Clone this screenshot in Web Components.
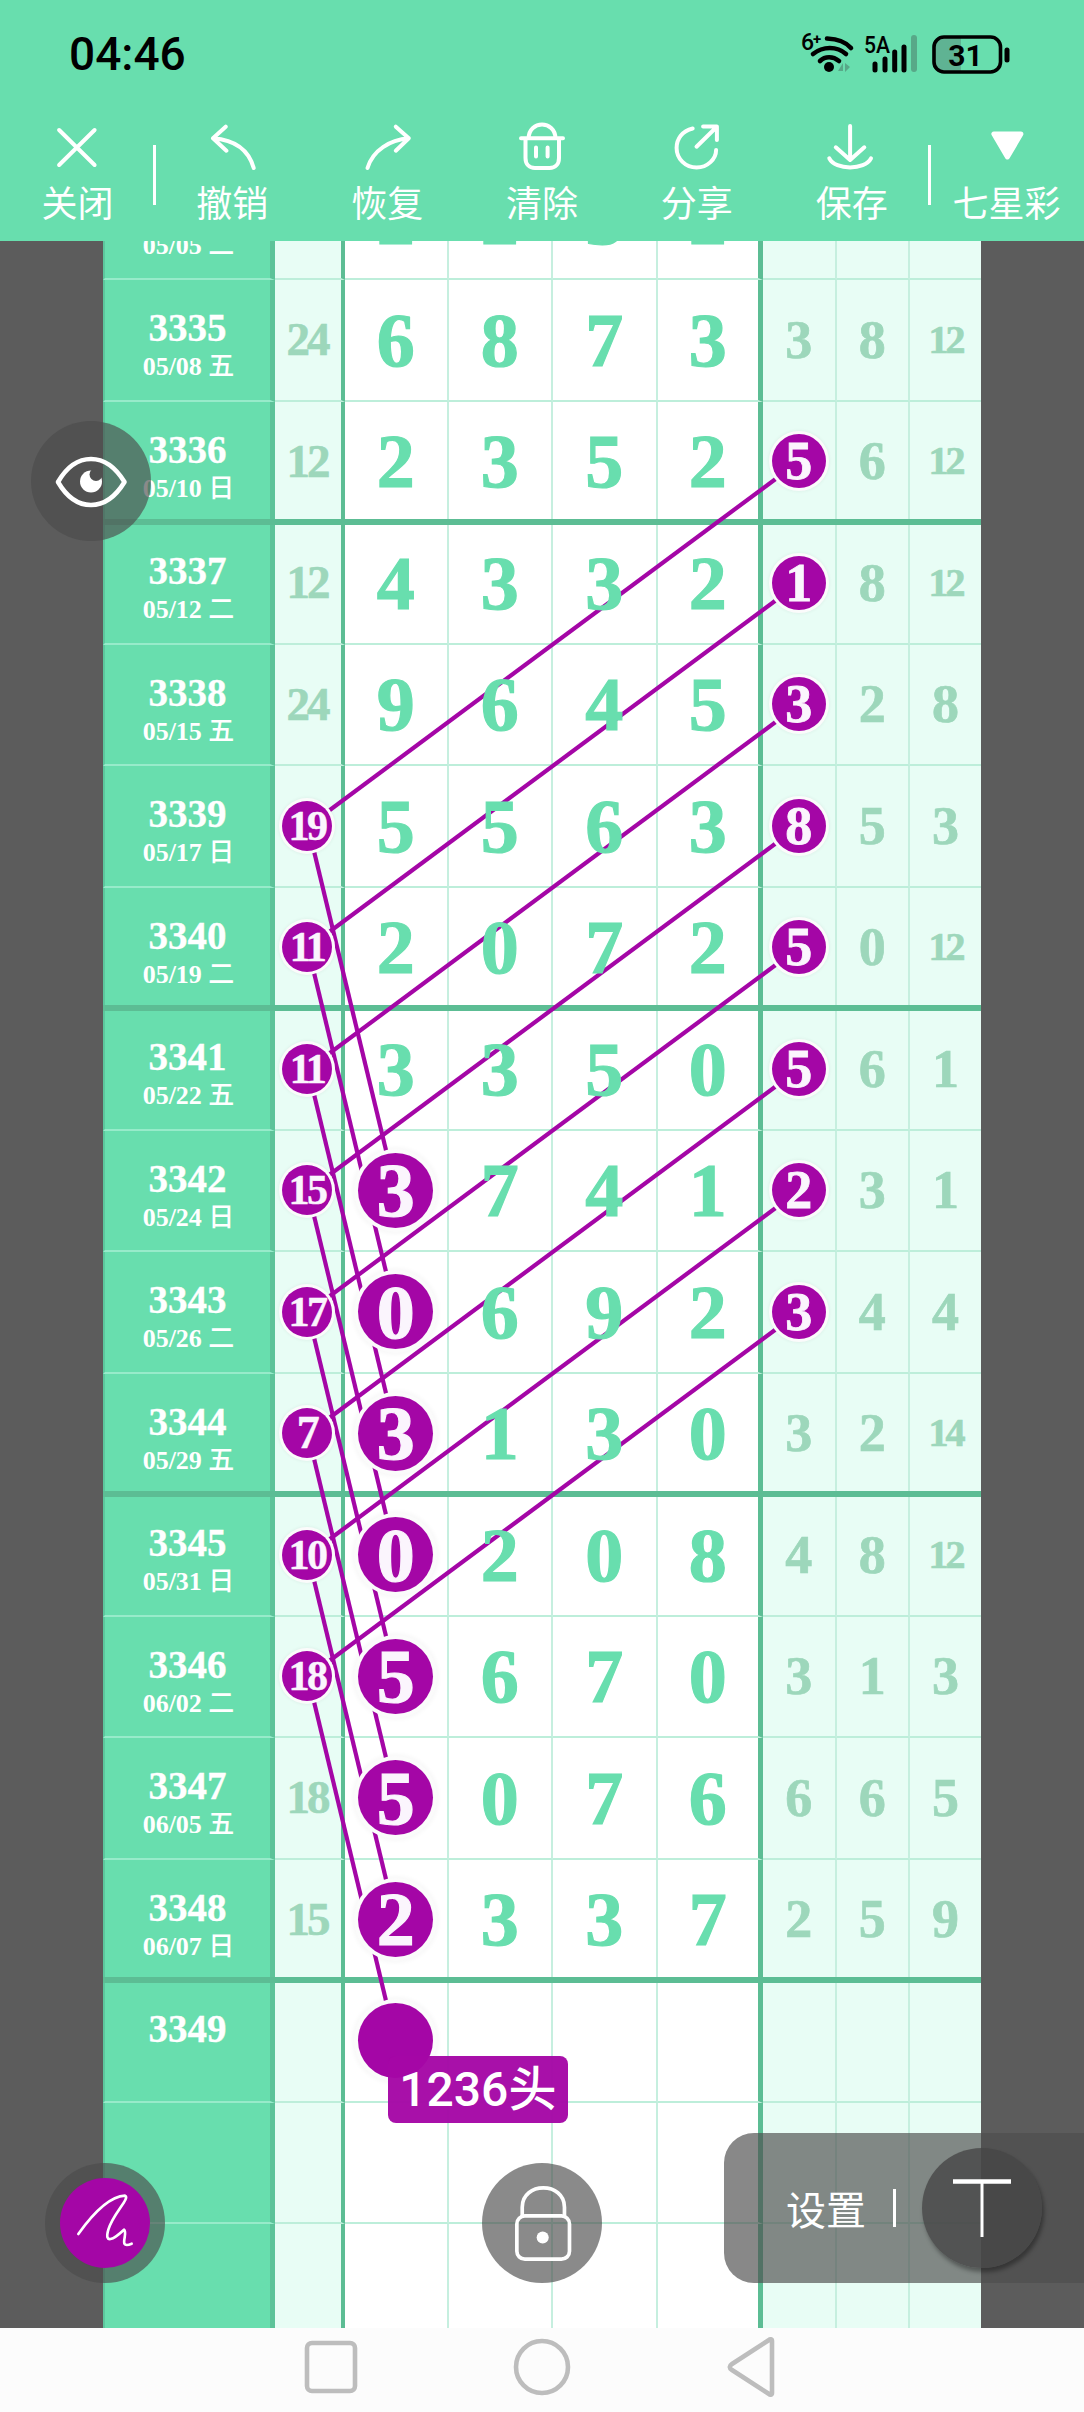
<!DOCTYPE html>
<html lang="zh">
<head>
<meta charset="utf-8">
<title>七星彩</title>
<style>
  html, body { margin: 0; padding: 0; background: #5c5c5c; }
</style>
</head>
<body>
<app-shell>
  <status-bar slot="top"></status-bar>
  <tool-bar slot="top">
    <tool-btn label="关闭" divider="right"><svg viewBox="47.4 122 60 50"><path d="M59.5 130 95 165M95 130 59.5 165"/></svg></tool-btn>
    <tool-btn label="撤销"><svg viewBox="202.3 122 60 50"><path d="M226 126.7 213.3 138.3 226.7 150.7M213.3 138.3C235 140 249 150 254 168"/></svg></tool-btn>
    <tool-btn label="恢复"><svg viewBox="357.2 122 60 50"><path d="M396 126.7 409 138.3 396 150.7M409 138.3C390 140 373 150 367.7 168"/></svg></tool-btn>
    <tool-btn label="清除"><svg viewBox="512 122 60 50"><path d="M521 138.3H563M528.6 138.3C529 120 555 120 555.5 138.3M525.5 138.3V158C525.5 164 529 168 535 168H549.5C555.5 168 559 164 559 158V138.3M536 147.5V156.5M547.6 147.5V156.5"/></svg></tool-btn>
    <tool-btn label="分享"><svg viewBox="666.9 122 60 50"><path d="M692.6 128.5C682 131 676.5 139 676.5 148C676.5 159 685.5 167.5 696.5 167.5C707.5 167.5 716 159 716 150M696.4 146.7 716.5 127M703 126.5H716.8V140"/></svg></tool-btn>
    <tool-btn label="保存"><svg viewBox="821.7 122 60 50"><path d="M849.8 126V159M835.5 147.3 849.8 160 864 147.3M829 158.3C835 170.5 864.5 170.5 870.7 158.3"/></svg></tool-btn>
    <tool-btn label="七星彩" divider="left"><svg viewBox="976.6 122 60 50"><path class="solid" d="M993.5 134H1020.5L1007 157Z"/></svg></tool-btn>
  </tool-bar>

  <draw-sheet slot="sheet">
    <sheet-row no="" date="05/05 二" sum="" digits="2 2 3 2" rest="- - -"></sheet-row>
    <sheet-row no="3335" date="05/08 五" sum="24" digits="6 8 7 3" rest="3 8 12"></sheet-row>
    <sheet-row no="3336" date="05/10 日" sum="12" digits="2 3 5 2" rest="*5 6 12" sep></sheet-row>
    <sheet-row no="3337" date="05/12 二" sum="12" digits="4 3 3 2" rest="*1 8 12"></sheet-row>
    <sheet-row no="3338" date="05/15 五" sum="24" digits="9 6 4 5" rest="*3 2 8"></sheet-row>
    <sheet-row no="3339" date="05/17 日" sum="*19" digits="5 5 6 3" rest="*8 5 3"></sheet-row>
    <sheet-row no="3340" date="05/19 二" sum="*11" digits="2 0 7 2" rest="*5 0 12" sep></sheet-row>
    <sheet-row no="3341" date="05/22 五" sum="*11" digits="3 3 5 0" rest="*5 6 1"></sheet-row>
    <sheet-row no="3342" date="05/24 日" sum="*15" digits="*3 7 4 1" rest="*2 3 1"></sheet-row>
    <sheet-row no="3343" date="05/26 二" sum="*17" digits="*0 6 9 2" rest="*3 4 4"></sheet-row>
    <sheet-row no="3344" date="05/29 五" sum="*7" digits="*3 1 3 0" rest="3 2 14" sep></sheet-row>
    <sheet-row no="3345" date="05/31 日" sum="*10" digits="*0 2 0 8" rest="4 8 12"></sheet-row>
    <sheet-row no="3346" date="06/02 二" sum="*18" digits="*5 6 7 0" rest="3 1 3"></sheet-row>
    <sheet-row no="3347" date="06/05 五" sum="18" digits="*5 0 7 6" rest="6 6 5"></sheet-row>
    <sheet-row no="3348" date="06/07 日" sum="15" digits="*2 3 3 7" rest="2 5 9" sep></sheet-row>
    <sheet-row no="3349" date="" sum="" digits="* - - -" rest="- - -" tag="1236头"></sheet-row>
    <sheet-row no="" date="" sum="" digits="- - - -" rest="- - -"></sheet-row>
    <sheet-row no="" date="" sum="" digits="- - - -" rest="- - -"></sheet-row>
  </draw-sheet>

  <float-btn slot="float" style="left:30.5px;top:421px">
    <svg viewBox="30.5 421 120 120" width="120" height="120">
      <path fill="none" stroke="#fff" stroke-width="4.6" stroke-linejoin="round" d="M57.5 482C68 464 80 459 90.5 459C101 459 113 464 124 482C113 500 101 505 90.5 505C80 505 68 500 57.5 482Z"/>
      <circle cx="90.5" cy="481.5" r="11" fill="#fff"/>
      <circle cx="95.5" cy="474.5" r="6.5" fill="#505050"/>
    </svg>
  </float-btn>
  <float-btn slot="float" style="left:45px;top:2163px">
    <svg viewBox="90 85 270 270" width="90" height="90">
      <circle cx="225" cy="220" r="135" fill="#a406a6"/>
      <path fill="none" stroke="#fff" stroke-width="8" stroke-linecap="round" stroke-linejoin="round" d="M145 253C190 190 240 140 285 138C302 145 250 190 235 240C222 285 250 270 282 240C296 250 262 300 305 282"/>
    </svg>
  </float-btn>
  <float-btn slot="float" style="left:482px;top:2163px">
    <svg viewBox="37 100 358 358" width="120" height="120">
      <path fill="none" stroke="#fff" stroke-width="11" d="M157 258V232C157 155 283 155 283 232V258"/>
      <rect x="141" y="258" width="157" height="129" rx="24" fill="none" stroke="#fff" stroke-width="11"/>
      <circle cx="218" cy="322" r="18" fill="#fff"/>
    </svg>
  </float-btn>
  <settings-panel slot="float"></settings-panel>

  <nav-bar slot="bottom"></nav-bar>
</app-shell>

<script>
class AppShell extends HTMLElement {
  connectedCallback() {
    this.attachShadow({ mode: 'open' });
    this.shadowRoot.innerHTML = `
      <style>
        :host {
          display: flex;
          flex-direction: column;
          position: relative;
          width: 1084px;
          height: 2412px;
          overflow: hidden;
          font-family: "Noto Sans CJK SC", Roboto, sans-serif;
        }
        .top { background: #68deae; height: 241px; display: flex; flex-direction: column; flex: none; }
        .sheet { flex: 1; min-height: 0; display: flex; }
        .bottom { flex: none; }
      </style>
      <div class="top"><slot name="top"></slot></div>
      <div class="sheet"><slot name="sheet"></slot></div>
      <div class="bottom"><slot name="bottom"></slot></div>
      <slot name="float"></slot>
    `;
  }
}

class StatusBar extends HTMLElement {
  connectedCallback() {
    this.attachShadow({ mode: 'open' });
    this.shadowRoot.innerHTML = `
      <style>
        :host {
          display: flex;
          justify-content: space-between;
          align-items: center;
          height: 106px;
          padding: 0 70px 0 69px;
          box-sizing: border-box;
        }
        .time { font: 500 46px Roboto, sans-serif; color: #000; margin-top: 1px; }
        svg { display: block; width: 215px; height: 48px; margin-top: 2px; }
        text { font-family: Roboto, sans-serif; fill: #000; }
        .arc { fill: none; stroke: #000; stroke-width: 4.6; stroke-linecap: round; }
        .bar { stroke: #000; stroke-width: 5; stroke-linecap: round; }
      </style>
      <span class="time">04:46</span>
      <svg viewBox="800 30 215 48">
        <text x="802" y="50" font-size="23" font-weight="500">6</text>
        <text x="814" y="44" font-size="15" font-weight="700">+</text>
        <path class="arc" d="M828 38.5C838 39 847 42 852 48"/>
        <path class="arc" d="M814 54C824 46 838 46 847 54"/>
        <path class="arc" d="M821 61C826 56 834 56 840 61"/>
        <circle cx="830" cy="67" r="5"/>
        <path d="M839 71 844 63V71ZM846 63 851 67 846 72Z" fill="#58a888"/>
        <text x="865" y="53" font-size="23" font-weight="500" textLength="26" lengthAdjust="spacingAndGlyphs">5A</text>
        <path class="bar" d="M876 64V70M886 59V70M895.7 52V70M905 47V70"/>
        <path d="M915 38V69" stroke="#58a888" stroke-width="6" stroke-linecap="round"/>
        <path d="M945 38H962V71H945C939 71 936 68 936 62V47C936 41 939 38 945 38Z" fill="#5fb393"/>
        <rect x="935" y="37" width="66.5" height="35" rx="10" fill="none" stroke="#000" stroke-width="3.6"/>
        <text x="966.5" y="66" font-size="30" font-weight="700" text-anchor="middle">31</text>
        <path d="M1008 50V60" stroke="#000" stroke-width="5" stroke-linecap="round"/>
      </svg>
    `;
  }
}

class ToolBar extends HTMLElement {
  connectedCallback() {
    this.attachShadow({ mode: 'open' });
    this.shadowRoot.innerHTML = `
      <style>
        :host {
          display: grid;
          grid-template-columns: repeat(7, 1fr);
          padding-top: 16px;
        }
      </style>
      <slot></slot>
    `;
  }
}

class ToolBtn extends HTMLElement {
  connectedCallback() {
    this.attachShadow({ mode: 'open' });
    this.shadowRoot.innerHTML = `
      <style>
        :host {
          display: flex;
          flex-direction: column;
          align-items: center;
          position: relative;
          color: #fff;
        }
        :host([divider])::after {
          content: "";
          position: absolute;
          top: 23px;
          height: 60px;
          width: 2.5px;
          background: #fff;
        }
        :host([divider="right"])::after { right: -1px; }
        :host([divider="left"])::after { left: -1px; }
        ::slotted(svg) {
          display: block;
          width: 60px;
          height: 50px;
          fill: none;
          stroke: #fff;
          stroke-width: 4;
          stroke-linecap: round;
          stroke-linejoin: round;
        }
        .label {
          font: 400 36px/40px "Noto Sans CJK SC", sans-serif;
          white-space: nowrap;
          margin-top: 9px;
        }
      </style>
      <slot></slot>
      <span class="label">${this.getAttribute('label')}</span>
    `;
    const solid = this.querySelector('.solid');
    if (solid) { solid.style.fill = '#fff'; solid.style.strokeWidth = '5'; }
  }
}

class PickBall extends HTMLElement {
  connectedCallback() {
    this.attachShadow({ mode: 'open' });
    const tag = this.getAttribute('tag');
    this.shadowRoot.innerHTML = `
      <style>
        :host {
          display: flex;
          align-items: center;
          justify-content: center;
          position: relative;
          z-index: 3;
          flex: none;
          width: 50px;
          height: 50px;
          border-radius: 50%;
          background: #a406a6;
          color: #fbf5fd;
          font: bold 42px/1 "Liberation Serif", serif;
          letter-spacing: -2.5px;
          -webkit-text-stroke: .5px #fbf5fd;
          box-shadow: 0 0 0 3px #fbfbfb, 0 0 3px 4px rgba(0, 0, 0, .04);
        }
        :host([size="mid"]) { width: 54px; height: 54px; font-size: 54px; letter-spacing: 0; -webkit-text-stroke-width: .8px; }
        :host([size="big"]) { width: 75px; height: 75px; font-size: 76px; letter-spacing: 0; -webkit-text-stroke-width: 1.2px;
          box-shadow: 0 0 0 4px #fbfbfb, 0 0 4px 6px rgba(0, 0, 0, .03); }
        :host([one]) { font-size: 46px; }
        .tag {
          position: absolute;
          left: 29.5px;
          top: 53px;
          padding: 0 11.5px;
          height: 67px;
          display: flex;
          align-items: center;
          border-radius: 8px;
          background: rgba(164, 6, 166, .96);
          color: #fff;
          font: 500 48px/1 Roboto, "Noto Sans CJK SC", sans-serif;
          letter-spacing: 0;
          -webkit-text-stroke: 0;
          white-space: nowrap;
        }
      </style>
      <slot></slot>
      ${tag ? `<span class="tag">${tag}</span>` : ''}
    `;
  }
}

class SheetRow extends HTMLElement {
  cell(token, cls, ballSize) {
    if (token === '-' || token === '') return `<div class="cell ${cls}"></div>`;
    if (token[0] === '*') {
      const val = token.slice(1);
      const one = ballSize === 'small' && val.length === 1 ? ' one' : '';
      const tag = !val && this.getAttribute('tag') ? ` tag="${this.getAttribute('tag')}"` : '';
      return `<div class="cell ${cls}"><pick-ball size="${ballSize}"${one}${tag}>${val}</pick-ball></div>`;
    }
    const small = token.length > 1 ? ' two' : '';
    return `<div class="cell ${cls}"><span class="num${small}">${token}</span></div>`;
  }

  connectedCallback() {
    this.attachShadow({ mode: 'open' });
    const no = this.getAttribute('no');
    const date = (this.getAttribute('date') || '').split(' ');
    const digits = this.getAttribute('digits').split(' ');
    const rest = this.getAttribute('rest').split(' ');
    this.shadowRoot.innerHTML = `
      <style>
        :host {
          display: grid;
          grid-template-columns: 172px 70px 103.5px 104.5px 104.5px 105.5px 73.5px 73.5px 71px;
          height: 121.5px;
          position: relative;
          flex: none;
          font-family: "Liberation Serif", "Noto Sans CJK SC", serif;
          font-weight: bold;
        }
        .cell {
          display: flex;
          align-items: center;
          justify-content: center;
          box-sizing: border-box;
          border-bottom: 2px solid #bdeeda;
        }
        .num { position: relative; z-index: 2; line-height: 1; }
        .name {
          flex-direction: column;
          justify-content: flex-start;
          background: #68deae;
          color: #fff;
          border-left: 2px solid #5cc79d;
          border-right: 5px solid #5dc399;
          border-bottom-color: #97ebca;
        }
        .name b { font-size: 39px; line-height: 40px; margin-top: 28px; min-height: 40px; -webkit-text-stroke: .3px #fff; }
        .name i { font-style: normal; font-size: 26px; line-height: 30px; margin: 1px 0 0 2px; white-space: nowrap; }
        .name i span { font-family: "Noto Sans CJK SC", sans-serif; font-weight: 500; }
        .sum {
          background: #e8fdf5;
          color: #9dd7bb;
          border-right: 4px solid #5cbd94;
          font-size: 47px;
          letter-spacing: -3px;
          padding-right: 2px;
          -webkit-text-stroke: .6px #9dd7bb;
        }
        .main {
          background: #fff;
          color: #68deae;
          border-right: 2px solid #c6efdf;
          font-size: 76px;
          -webkit-text-stroke: 1.2px #68deae;
        }
        .main.last { border-right: 5px solid #5cbd94; }
        .rest {
          background: #e8fdf5;
          color: #9dd7bb;
          border-right: 2px solid #c6efdf;
          font-size: 54px;
          -webkit-text-stroke: .7px #9dd7bb;
        }
        .rest.last { border-right: 0; }
        .rest .two { font-size: 40px; letter-spacing: -3px; }
        .sep {
          position: absolute;
          z-index: 1;
          left: 0;
          right: 0;
          bottom: -2px;
          height: 6px;
          background: #5cbd94;
        }
      </style>
      <div class="cell name">
        ${no || date[0] ? `<b>${no}</b>` : ''}
        ${date[0] ? `<i>${date[0]} <span>${date[1]}</span></i>` : ''}
      </div>
      ${this.cell(this.getAttribute('sum'), 'sum', 'small')}
      ${digits.map((d, i) => this.cell(d, 'main' + (i === 3 ? ' last' : ''), 'big')).join('')}
      ${rest.map((d, i) => this.cell(d, 'rest' + (i === 2 ? ' last' : ''), 'mid')).join('')}
      ${this.hasAttribute('sep') ? '<div class="sep"></div>' : ''}
    `;
  }
}

class DrawSheet extends HTMLElement {
  connectedCallback() {
    this.attachShadow({ mode: 'open' });
    // row centre in page coordinates, rows start at 158.5 and are 121.5 tall
    const rowY = no => 158.5 + 121.5 * (no - 3334) + 60.25;
    let lines = '';
    for (let no = 3336; no <= 3343; no++) {
      lines += `<line x1="798.75" y1="${rowY(no)}" x2="308" y2="${rowY(no + 3)}"/>`;
    }
    for (let no = 3339; no <= 3346; no++) {
      lines += `<line x1="308" y1="${rowY(no)}" x2="395.75" y2="${rowY(no + 3)}"/>`;
    }
    this.shadowRoot.innerHTML = `
      <style>
        :host {
          display: block;
          position: relative;
          z-index: 0;
          flex: 1;
          overflow: hidden;
          background: #5c5c5c;
        }
        .rows {
          display: flex;
          flex-direction: column;
          width: 878px;
          margin: -82.5px 0 0 103px;
        }
        svg {
          position: absolute;
          left: 0;
          top: 0;
          width: 1084px;
          height: 2087px;
          z-index: 1;
          stroke: #a406a6;
          stroke-width: 4.2;
        }
      </style>
      <div class="rows"><slot></slot></div>
      <svg viewBox="0 241 1084 2087">${lines}</svg>
    `;
  }
}

class FloatBtn extends HTMLElement {
  connectedCallback() {
    this.attachShadow({ mode: 'open' });
    this.shadowRoot.innerHTML = `
      <style>
        :host {
          position: absolute;
          z-index: 5;
          display: flex;
          align-items: center;
          justify-content: center;
          width: 120px;
          height: 120px;
          border-radius: 50%;
          background: rgba(75, 75, 75, .65);
        }
        ::slotted(svg) { display: block; }
      </style>
      <slot></slot>
    `;
  }
}

class SettingsPanel extends HTMLElement {
  connectedCallback() {
    this.attachShadow({ mode: 'open' });
    this.shadowRoot.innerHTML = `
      <style>
        :host {
          position: absolute;
          z-index: 5;
          left: 724px;
          right: 0;
          top: 2133px;
          height: 150px;
          box-sizing: border-box;
          padding: 15px 0 0 62px;
          display: flex;
          align-items: flex-start;
          border-radius: 30px 0 0 30px;
          background: rgba(78, 78, 78, .67);
          color: #fff;
        }
        .label { font: 400 40px/120px "Noto Sans CJK SC", sans-serif; white-space: nowrap; }
        .bar { width: 2.5px; height: 38px; background: #fff; margin: 41px 0 0 27px; flex: none; }
        .round {
          width: 120px;
          height: 120px;
          margin-left: 26.5px;
          flex: none;
          border-radius: 50%;
          background: rgba(70, 70, 70, .8);
          box-shadow: 2px 4px 4px rgba(0, 0, 0, .35);
          display: flex;
          align-items: center;
          justify-content: center;
        }
        svg { display: block; stroke: #fff; stroke-width: 3; fill: none; }
      </style>
      <span class="label">设置</span>
      <span class="bar"></span>
      <span class="round">
        <svg width="60" height="60" viewBox="0 0 60 60"><path d="M1 3.5H59" stroke-width="4.5"/><path d="M30 3.5V59"/></svg>
      </span>
    `;
  }
}

class NavBar extends HTMLElement {
  connectedCallback() {
    this.attachShadow({ mode: 'open' });
    this.shadowRoot.innerHTML = `
      <style>
        :host {
          display: flex;
          align-items: center;
          justify-content: center;
          height: 84px;
          box-sizing: border-box;
          background: #fcfcfc;
          gap: 155px;
          padding: 0 4px 6px 0;
        }
        svg { display: block; fill: none; stroke: #bdbdbd; stroke-width: 4.6; stroke-linejoin: round; }
      </style>
      <svg width="54" height="54" viewBox="0 0 54 54"><rect x="3" y="3" width="48" height="48" rx="5"/></svg>
      <svg width="58" height="58" viewBox="0 0 58 58"><circle cx="29" cy="29" r="26"/></svg>
      <svg width="50" height="60" viewBox="0 0 50 60"><path d="M46 4C46 2 44 2 43 3L6 27C3 29 3 31 6 33L43 57C44 58 46 58 46 56Z"/></svg>
    `;
  }
}

customElements.define('app-shell', AppShell);
customElements.define('status-bar', StatusBar);
customElements.define('tool-bar', ToolBar);
customElements.define('tool-btn', ToolBtn);
customElements.define('pick-ball', PickBall);
customElements.define('sheet-row', SheetRow);
customElements.define('draw-sheet', DrawSheet);
customElements.define('float-btn', FloatBtn);
customElements.define('settings-panel', SettingsPanel);
customElements.define('nav-bar', NavBar);
</script>
</body>
</html>
